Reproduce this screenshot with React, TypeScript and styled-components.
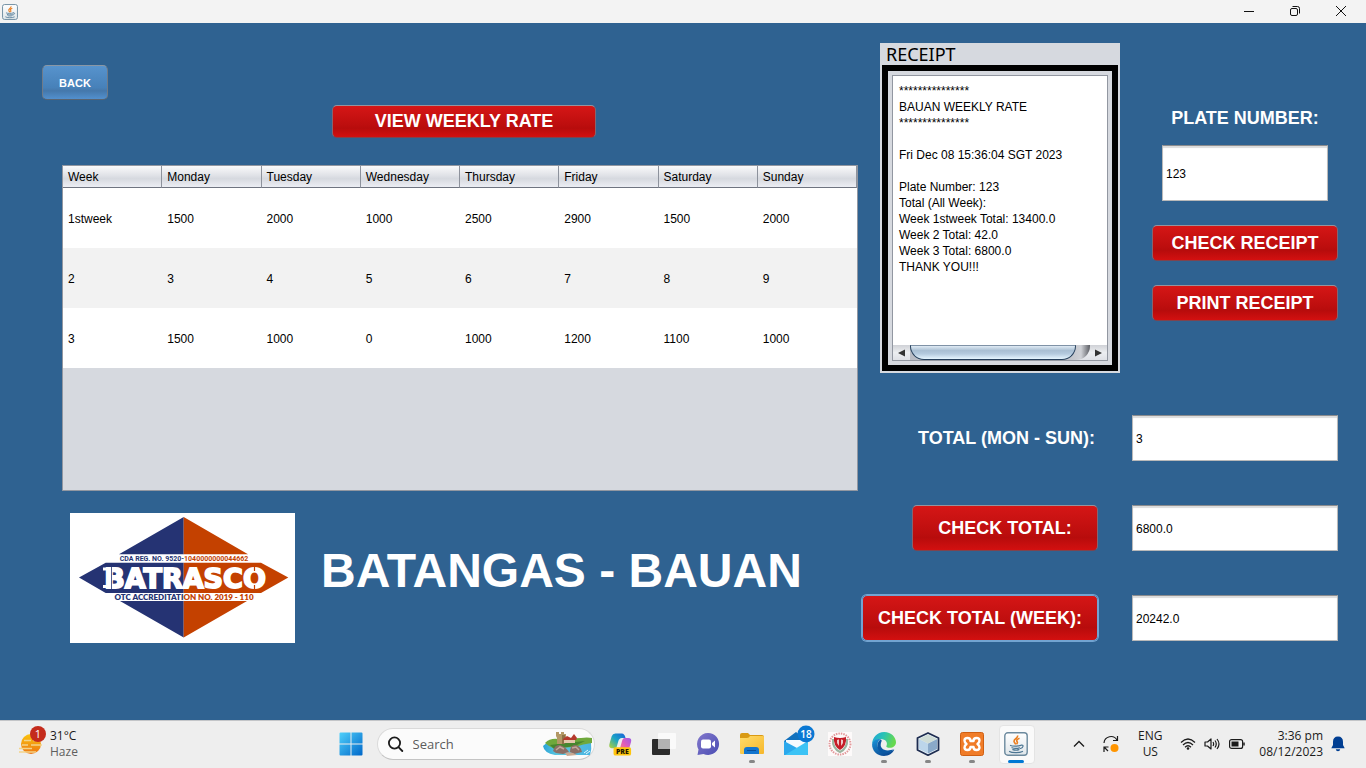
import React from "react";
import styled, { createGlobalStyle, css } from "styled-components";

const GlobalStyle = createGlobalStyle`
  *, *::before, *::after { box-sizing: border-box; }
  body { margin: 0; font-family: "Liberation Sans", Arial, sans-serif; }
  button, input, textarea { font: inherit; margin: 0; }
  h1 { margin: 0; }
`;

const Desktop = styled.div`
  display: flex;
  flex-direction: column;
  min-height: 100vh;
  background: #2f6291;
`;

/* ---------- window title bar ---------- */

const TitleBar = styled.header`
  display: flex;
  align-items: center;
  justify-content: space-between;
  height: 23px;
  padding: 0 2px;
  background: #f3f3f3;
`;

const WindowControls = styled.div`
  display: flex;
`;

const WindowButton = styled.button`
  display: flex;
  align-items: center;
  justify-content: center;
  width: 46px;
  height: 22px;
  padding: 0 0 2px;
  border: 0;
  background: transparent;
`;

/* ---------- form ---------- */

const Content = styled.main`
  flex: 1;
  display: grid;
  grid-template-columns: minmax(0, 1fr) 476px;
  column-gap: 4px;
  padding: 20px 28px 20px 42px;
`;

const RatesColumn = styled.section`
  display: flex;
  flex-direction: column;
  padding-top: 22px;
`;

const buttonFace = css`
  border: 1px solid;
  border-radius: 5px;
  color: #fff;
  font-weight: bold;
  white-space: nowrap;
`;

const BackButton = styled.button`
  ${buttonFace}
  align-self: flex-start;
  width: 66px;
  height: 35px;
  padding: 0;
  font-size: 11px;
  border-color: #8a97a5 #707b88 #5a6470;
  background: linear-gradient(#5793cd, #4781b9 65%, #4578ab 75%, #5290ce);
`;

const RedButton = styled.button<{ $width: number; $height: number; $focused?: boolean }>`
  ${buttonFace}
  width: ${(p) => p.$width}px;
  height: ${(p) => p.$height}px;
  padding: 0;
  font-size: 18px;
  border-color: #96939e #86646f #7c4450;
  background: linear-gradient(#d51616, #bd0e0e 60%, #b70c0c 72%, #d31010);
  ${(p) =>
    p.$focused &&
    css`
      border-color: #73a4d1;
      box-shadow: 0 0 0 1px #73a4d1;
    `}
`;

const ViewRow = styled.div`
  display: flex;
  justify-content: center;
  padding: 5px 0 27px 28px;
`;

const TablePane = styled.div`
  margin-left: 20px;
  min-height: 326px;
  border: 1px solid #9297a1;
  background: #d6d9df;
`;

const RateTable = styled.table`
  width: 100%;
  table-layout: fixed;
  border-collapse: separate;
  border-spacing: 0;
  font-size: 12px;
  color: #000;

  th {
    height: 22px;
    padding: 0 5px;
    font-weight: normal;
    text-align: left;
    border-right: 1px solid #8d929c;
    border-bottom: 1px solid #6f7480;
    background: linear-gradient(#fafafb, #e0e2e7 45%, #d6d9df 60%, #eceef4);
  }
  td {
    height: 60px;
    padding: 2px 5px 0;
    background: #fff;
  }
  tbody tr:nth-child(even) td {
    background: #f2f2f2;
  }
`;

const Brand = styled.div`
  display: flex;
  align-items: center;
  gap: 26px;
  padding: 22px 0 0 28px;
`;

const Destination = styled.h1`
  padding-bottom: 14px;
  font-size: 48px;
  line-height: 56px;
  color: #fff;
  white-space: nowrap;
`;

const ReceiptColumn = styled.section`
  display: flex;
  flex-direction: column;
  gap: 42px;
`;

const ReceiptRow = styled.div`
  display: flex;
  justify-content: space-between;
  padding-left: 18px;
`;

const ReceiptPanel = styled.div`
  width: 240px;
  padding: 0 2px 2px;
  background: #d6d9df;
`;

const ReceiptTitle = styled.label`
  display: block;
  height: 22px;
  padding-left: 4px;
  font: 18px/22px "Noto Sans", sans-serif;
  color: #000;
`;

const ReceiptFrame = styled.div`
  padding: 4px;
  border: 6px solid #000;
`;

const ReceiptPane = styled.div`
  display: flex;
  flex-direction: column;
  border: 1px solid #9297a1;
  background: #fff;
`;

const ReceiptText = styled.textarea`
  display: block;
  width: 100%;
  height: 269px;
  padding: 7px 6px 6px;
  border: 0;
  outline: 0;
  resize: none;
  overflow: hidden;
  white-space: pre;
  font-size: 12px;
  line-height: 16px;
  color: #000;
  background: #fff;
`;

const ScrollBar = styled.div`
  display: flex;
  height: 15px;
  background: linear-gradient(#cfd1d6, #eceef1 50%, #dfe1e6);
`;

const ScrollArrow = styled.button`
  display: flex;
  align-items: center;
  justify-content: center;
  width: 17px;
  padding: 0;
  border: 0;
  background: transparent;
`;

const ScrollTrack = styled.div`
  flex: 1;
  padding-right: 14px;
  border-radius: 0 0 14px 0;
  background: linear-gradient(90deg, #b9bcc4 85%, #cfd1d6 95%, #5c5e64);
`;

const ScrollThumb = styled.div`
  height: 15px;
  border: 1px solid #26405c;
  border-top-color: #7f92a6;
  border-radius: 0 0 14px 14px;
  background: linear-gradient(#dfeaf4, #a9bfd3 35%, #b4cade 60%, #e6f6ff);
`;

const ReceiptControls = styled.div`
  display: flex;
  flex-direction: column;
  align-items: center;
  width: 186px;
  padding-top: 63px;
`;

const FieldLabel = styled.label`
  font-size: 18px;
  line-height: 24px;
  font-weight: bold;
  color: #fff;
  white-space: nowrap;
`;

const TextField = styled.input`
  width: 100%;
  height: 46px;
  padding: 1px 3px 0;
  border: 1px solid #b9b9b9;
  border-top-color: #8b8c8e;
  border-radius: 0;
  font-size: 12px;
  color: #000;
  background: #fff;
  box-shadow: inset 0 2px 1px #dcdcdc;
`;

const PlateField = styled(TextField)`
  width: 166px;
  height: 56px;
  margin: 15px 0 24px;
`;

const ReceiptActions = styled.div`
  display: flex;
  flex-direction: column;
  gap: 24px;
`;

const Totals = styled.div`
  display: grid;
  grid-template-columns: minmax(0, 1fr) 206px;
  column-gap: 34px;
  row-gap: 44px;
  align-items: center;
  justify-items: end;
`;

const TotalLabel = styled(FieldLabel)`
  padding-right: 3px;
`;

/* ---------- taskbar ---------- */

const Taskbar = styled.footer`
  display: grid;
  grid-template-columns: 1fr auto 1fr;
  align-items: center;
  height: 48px;
  padding-bottom: 2px;
  border-top: 1px solid #c3c5c8;
  background: #eeeeee;
  font: 12px/16px "Open Sans", "Noto Sans", sans-serif;
  color: #1b1b1b;
`;

const Weather = styled.div`
  display: flex;
  align-items: center;
  gap: 3px;
  padding-left: 17px;
`;

const Muted = styled.div`
  color: #5e5e5e;
`;

const Apps = styled.nav`
  display: flex;
  align-items: center;
`;

const AppButton = styled.button<{ $running?: boolean; $active?: boolean }>`
  position: relative;
  display: flex;
  align-items: center;
  justify-content: center;
  width: 44px;
  height: 44px;
  padding: 0;
  border: 0;
  background: transparent;

  ${(p) =>
    p.$active &&
    css`
      &::before {
        content: "";
        position: absolute;
        inset: 3px 3px 2px 5px;
        border: 1px solid #e4e4e4;
        border-radius: 4px;
        background: #fafafa;
      }
    `}
  ${(p) =>
    (p.$running || p.$active) &&
    css`
      &::after {
        content: "";
        position: absolute;
        bottom: 3px;
        left: 50%;
        width: ${p.$active ? 16 : 6}px;
        height: 3px;
        margin-left: ${p.$active ? -8 : -3}px;
        border-radius: 2px;
        background: ${p.$active ? "#0078d4" : "#868686"};
      }
    `}
  svg {
    position: relative;
    overflow: visible;
  }
`;

const SearchBox = styled.label`
  display: flex;
  align-items: center;
  width: 218px;
  height: 32px;
  margin: 0 3px 0 4px;
  padding: 0 1px 0 10px;
  border: 1px solid #dadada;
  border-bottom-color: #c4c4c4;
  border-radius: 16px;
  background: #fbfbfb;
`;

const SearchInput = styled.input`
  flex: 1;
  min-width: 0;
  padding: 0 0 0 9px;
  border: 0;
  outline: 0;
  background: transparent;
  font-size: 13px;
  &::placeholder {
    color: #5c5c5c;
    opacity: 1;
  }
`;

const Tray = styled.div`
  display: flex;
  align-items: center;
  justify-content: flex-end;
  padding-right: 21px;
`;

const ChevronBox = styled.div`
  display: flex;
  width: 29px;
`;

const Language = styled.div`
  width: 60px;
  text-align: center;
`;

const TrayIcons = styled.div`
  display: flex;
  align-items: center;
  gap: 8px;
  margin-right: 14px;
`;

const Clock = styled.div`
  margin-right: 8px;
  text-align: right;
`;

/* ---------- drawings ---------- */

const JavaIcon = ({ size }: { size: number }) => (
  <svg width={size} height={size} viewBox="0 0 24 24" aria-hidden="true">
    <defs>
      <linearGradient id="javaFace" x1="0" y1="0" x2="0" y2="1">
        <stop offset="0" stopColor="#fff" />
        <stop offset="1" stopColor="#dfe6ea" />
      </linearGradient>
    </defs>
    <rect x="0.8" y="0.8" width="22.4" height="22.4" rx="3" fill="url(#javaFace)" stroke="#6c8a9e" strokeWidth="1.4" />
    <path d="M13.500 3.500c1.200 2.800-5 3.800-3.200 6.600.6 1 1.200 1.500 1 2.400M15.500 6.300c-3.600 1.400-3 2.500-2.200 3.700.4.8-.1 1.500-.8 2.200" fill="none" stroke="#ea7d1e" strokeWidth="1.600" />
    <path d="M6.500 13.500c2 1 7.500.9 10.300-.1M8 15.700c2 .8 5 .8 7.500.1M8.800 17.600c1.800.6 4.400.6 6.200 0M5.500 19.500c2 1.500 10 1.600 13 0M17 13.200c3-.6 2.600 2.400-.5 3.300" fill="none" stroke="#4c7693" strokeWidth="1.200" strokeLinecap="round" />
  </svg>
);

const BatrascoLogo = () => (
  <svg width="225" height="130" viewBox="0 0 225 130" role="img" aria-label="Batrasco">
    <rect width="225" height="130" fill="#fff" />
    <path d="M113.700 4V41.300H49ZM9 64.500 35.700 49.700H113.700V80H35.700ZM50 88H113.700V124.500Z" fill="#253373" />
    <path d="M113.700 4V41.300H178ZM218.300 64.500 191 49.700H113.700V80H191ZM177 88H113.700V124.500Z" fill="#c44100" />
    <text x="114" y="48" textAnchor="middle" fontFamily="Roboto, sans-serif" fontWeight="700" fontSize="7" fill="#253373">
      CDA REG. NO. 9520-<tspan fill="#c44100">1040000000044662</tspan>
    </text>
    <text x="115" y="74.500" textAnchor="middle" fontFamily="DejaVu Sans, sans-serif" fontWeight="bold" fontSize="27" fill="#fff" stroke="#fff" strokeWidth="1.800">
      BATRASCO
    </text>
    <path d="M33 56H38M33 73.500H38" stroke="#fff" strokeWidth="3" />
    <path d="M41.500 53V76" stroke="#253373" strokeWidth="0.800" />
    <path d="M184.500 53V58M184.500 72V76" stroke="#c44100" strokeWidth="1.200" />
    <text x="114" y="86.700" textAnchor="middle" fontFamily="Lato, sans-serif" fontWeight="800" fontSize="8" fill="#253373">
      OTC ACCREDITATI<tspan fill="#c44100">ON NO. 2019 - 110</tspan>
    </text>
  </svg>
);

const HazeIcon = () => (
  <svg width="30" height="32" viewBox="0 1 30 32" overflow="visible" aria-hidden="true">
    <defs>
      <linearGradient id="sun" x1="0" y1="0" x2="0" y2="1">
        <stop offset="0" stopColor="#fbc40d" />
        <stop offset="1" stopColor="#ec7413" />
      </linearGradient>
    </defs>
    <circle cx="14" cy="17" r="10" fill="url(#sun)" />
    <path d="M7 13.500H14M16 13.500H20M5 18H11M14 18H25M2 21.500H15M2 25H19" stroke="#f3d489" strokeWidth="1.500" />
    <circle cx="21" cy="7" r="8" fill="#c42b1c" />
    <text x="21" y="11" textAnchor="middle" fontFamily="Open Sans, sans-serif" fontSize="11" fill="#fff">1</text>
  </svg>
);

const StartIcon = () => (
  <svg width="24" height="24" viewBox="0 0 24 24" aria-hidden="true">
    <defs>
      <linearGradient id="start" x1="0" y1="0" x2="1" y2="1">
        <stop offset="0" stopColor="#4fd0fb" />
        <stop offset="1" stopColor="#0067c9" />
      </linearGradient>
    </defs>
    <path d="M1.500.5H11.500V11.500H.5V1.500Q.5.500 1.500.5ZM12.500.5H22.500Q23.500.500 23.500 1.500V11.500H12.500ZM.5 12.500H11.500V23.500H1.500Q.5 23.500.5 22.500ZM12.500 12.500H23.500V22.500Q23.500 23.500 22.500 23.500H12.500Z" fill="url(#start)" />
  </svg>
);

const CastleIcon = () => (
  <svg width="52" height="28" viewBox="0 0 52 28" aria-hidden="true">
    <defs>
      <linearGradient id="sea" x1="0" y1="0" x2="1" y2="0">
        <stop offset="0" stopColor="#2ba3d6" />
        <stop offset="0.300" stopColor="#5cc8e0" />
        <stop offset="1" stopColor="#49b4e2" />
      </linearGradient>
    </defs>
    <path d="M2 16Q6 11 12 14L50 13Q51 19 49 25H14Q3 23 2 16Z" fill="url(#sea)" />
    <path d="M4 13Q9 8 17 9L40 8Q46 7 51 8V13Q42 14 34 17L12 18 8 16Z" fill="#6fa83c" />
    <path d="M9 15Q24 13 44 11L34 16 13 19Z" fill="#47852f" />
    <path d="M15 2H18V4H20V2H23V4H25V9H24V14H16V8L15 6Z" fill="#b39866" />
    <path d="M21 5H24V14H21Z" fill="#8d7247" />
    <path d="M22 9 26 6 30 8 33 4 36 8 35 10H22Z" fill="#b5392d" />
    <path d="M23 10H34V13H23Z" fill="#e4c7ab" />
    <path d="M12 21Q14 14 19 15 25 17 28 22L22 24 15 23ZM29 22Q29 15 34 15 40 16 41 22L33 24Z" fill="#8b6f66" />
    <path d="M24 23Q30 21 36 25L26 26Z" fill="#c9a992" />
    <path d="M15 20 19 17 23 19M31 18 35 17 38 20" stroke="#c3a89a" strokeWidth="1.500" fill="none" />
    <path d="M43 23 47 20M45 24 49 21" stroke="#e3f6fb" strokeWidth="1" />
  </svg>
);

const CopilotIcon = () => (
  <svg width="24" height="24" viewBox="0 0 26 25" aria-hidden="true">
    <defs>
      <linearGradient id="copA" x1="1" y1="0" x2="0" y2="1">
        <stop offset="0" stopColor="#1960d8" />
        <stop offset="0.500" stopColor="#19a4c6" />
        <stop offset="1" stopColor="#b7d336" />
      </linearGradient>
      <linearGradient id="copB" x1="1" y1="0" x2="0" y2="1">
        <stop offset="0" stopColor="#9c5be8" />
        <stop offset="0.500" stopColor="#e05cba" />
        <stop offset="1" stopColor="#ff9060" />
      </linearGradient>
    </defs>
    <path d="M8 1H15Q18 1 19 6L15 6Q12 6 11 10L9 17H4Q0 17 2 11L4 4Q5 1 8 1Z" fill="url(#copA)" />
    <path d="M18 6H22Q26 6 25 10L23 17Q22 21 18 21H12L15 10Q16 6 18 6Z" fill="url(#copB)" />
    <rect x="6" y="16" width="19" height="9" rx="2" fill="#fec50d" />
    <text x="15.500" y="23.500" textAnchor="middle" fontFamily="Open Sans, sans-serif" fontWeight="800" fontSize="7.500" fill="#221900">PRE</text>
  </svg>
);

const TaskViewIcon = () => (
  <svg width="24" height="24" viewBox="0 0 24 24" aria-hidden="true">
    <rect x="0" y="7" width="18" height="16" rx="1" fill="#2c2c2c" />
    <rect x="6" y="1" width="18" height="16" rx="1" fill="#fafafa" />
    <rect x="6" y="7" width="12" height="10" fill="#b3b3b3" />
  </svg>
);

const ChatIcon = () => (
  <svg width="24" height="24" viewBox="0 0 24 24" aria-hidden="true">
    <defs>
      <linearGradient id="chat" x1="0" y1="0" x2="1" y2="1">
        <stop offset="0" stopColor="#8378cc" />
        <stop offset="1" stopColor="#4a4db3" />
      </linearGradient>
    </defs>
    <path d="M12 1a11 11 0 1 1-4.500 21L1.500 23 2.500 17.500A11 11 0 0 1 12 1Z" fill="url(#chat)" />
    <rect x="5" y="7.500" width="10" height="9" rx="2" fill="#fff" />
    <path d="M16 11 19 8.500V15.500L16 13Z" fill="#fff" />
  </svg>
);

const FolderIcon = () => (
  <svg width="26" height="24" viewBox="0 0 26 24" aria-hidden="true">
    <defs>
      <linearGradient id="folder" x1="0" y1="0" x2="1" y2="1">
        <stop offset="0" stopColor="#ffdc6a" />
        <stop offset="1" stopColor="#f6b72b" />
      </linearGradient>
    </defs>
    <path d="M1 3Q1 1 3 1H9L11 3H23Q25 3 25 5V10H1Z" fill="#d99a14" />
    <path d="M1 6H8Q10 6 11 4H24Q25 4 25 5V21Q25 22 24 22H2Q1 22 1 21Z" fill="url(#folder)" />
    <path d="M5 22V18Q5 15 8 15H17Q20 15 20 18V22Z" fill="#1376cf" />
    <path d="M8 18.500H17" stroke="#0a519b" />
  </svg>
);

const MailIcon = () => (
  <svg width="32" height="30" viewBox="-3 3 32 30" aria-hidden="true">
    <path d="M1 15 13 6 25 15V28Q25 29 24 29H2Q1 29 1 28Z" fill="#1271bd" />
    <path d="M3 14H23V18L13 23 3 18Z" fill="#f5fafe" />
    <path d="M1 15 14 22 6 29H2Q1 29 1 28Z" fill="#2ba8ec" />
    <path d="M25 15 2 29H24Q25 29 25 28Z" fill="#3cc3f5" />
    <circle cx="23" cy="8" r="8.500" fill="#0a78d3" />
    <text x="23" y="12" textAnchor="middle" fontFamily="Open Sans, sans-serif" fontSize="10" fontWeight="600" fill="#fff">18</text>
  </svg>
);

const CrestIcon = () => (
  <svg width="24" height="24" viewBox="0 0 24 24" aria-hidden="true">
    <rect width="24" height="24" fill="#fdfafa" />
    <circle cx="12" cy="12" r="10.500" fill="none" stroke="#e29a9c" strokeWidth="2" strokeDasharray="1.500 1" />
    <path d="M5 7Q4 16 12 20 20 16 19 7" fill="none" stroke="#9cb5a0" strokeWidth="2" />
    <path d="M6 5Q12 7 18 5 19 14 12 18 5 14 6 5Z" fill="#c51d27" />
    <path d="M9 8 12 7 15 8V11Q14 13 12 15 10 13 9 11Z" fill="#efc5c6" />
    <path d="M12 7V15" stroke="#c51d27" strokeWidth="2" />
  </svg>
);

const EdgeIcon = () => (
  <svg width="24" height="24" viewBox="0 0 24 24" aria-hidden="true">
    <defs>
      <linearGradient id="edgeTop" x1="0" y1="0" x2="1" y2="0.300">
        <stop offset="0" stopColor="#1ba2dc" />
        <stop offset="0.500" stopColor="#2bc3b4" />
        <stop offset="1" stopColor="#65d84f" />
      </linearGradient>
      <linearGradient id="edgeBody" x1="0" y1="0" x2="0.600" y2="1">
        <stop offset="0" stopColor="#1b95da" />
        <stop offset="1" stopColor="#0b4a94" />
      </linearGradient>
    </defs>
    <path d="M.2 12C.2 6 5 0 12.200 0 19.500 0 24 5.500 24 10.300c0 3.500-2.900 5.500-6.100 5.500-2.700 0-4-.9-3.500-1.800C15.500 12 15.200 8 10.400 7.200 5.500 6.400 2 8.500.2 12Z" fill="url(#edgeTop)" />
    <path d="M.1 12C1 8 4.500 6.500 8.500 7c-5 4-3.500 10.500 2 12.300 4.400 1.500 8.500.3 11.800-1.700C20.500 21.500 16.700 24 12 24 5 24-.3 18.500.1 12Z" fill="url(#edgeBody)" />
    <path d="M8.800 12C8 16 12 20.500 22 17.300 16 23.500 5.600 21.500 5.400 14 5.300 11 6.800 8.500 8.700 7.300 10.500 8.300 9.300 9.500 8.800 12Z" fill="#0c59a4" />
  </svg>
);

const NetBeansIcon = () => (
  <svg width="24" height="24" viewBox="0 0 24 24" aria-hidden="true">
    <path d="M12 1 22.500 6V18L12 23.200 1.500 18V6Z" fill="#e9f2f8" stroke="#1d2c50" strokeWidth="1.800" strokeLinejoin="round" />
    <path d="M3 7 12 11.500V21.500L3 17Z" fill="#bcd5ea" />
    <path d="M12 11.500 21 7V17L12 21.500Z" fill="#8aa9c9" />
    <path d="M12 2.500 21 7 12 11.500 3 7Z" fill="#cfdcd6" />
  </svg>
);

const XamppIcon = () => (
  <svg width="24" height="24" viewBox="0 0 24 24" aria-hidden="true">
    <rect x="0.500" y="0.500" width="23" height="23" rx="2" fill="#f07c28" stroke="#cf5f12" />
    <path d="M7.500 6Q10.500 6 10.500 9H13.500Q13.500 6 16.500 6 19.500 6 19.500 8.500 19.500 10.500 17.500 12 19.500 13.500 19.500 15.500 19.500 18 16.500 18 13.500 18 13.500 15H10.500Q10.500 18 7.500 18 4.500 18 4.500 15.500 4.500 13.500 6.500 12 4.500 10.500 4.500 8.500 4.500 6 7.500 6Z" fill="none" stroke="#fff" strokeWidth="2.400" strokeLinejoin="round" />
  </svg>
);

const SyncIcon = () => (
  <svg width="18" height="18" viewBox="0 0 18 18" fill="none" stroke="#1b1b1b" strokeWidth="1.200" aria-hidden="true">
    <path d="M2 8A7 7 0 0 1 15 5M15.500 1V5.500H11M6 16 2.500 12.500M2 17V12H6.500" />
    <circle cx="12.500" cy="13" r="4" fill="#ff9500" stroke="none" />
  </svg>
);

const WifiIcon = () => (
  <svg width="16" height="14" viewBox="0 0 16 14" fill="none" stroke="#1b1b1b" strokeWidth="1.200" aria-hidden="true">
    <path d="M1 5.500Q8-1.500 15 5.500M3 8Q8 3 13 8M5 10.200Q8 7.300 11 10.200" />
    <circle cx="8" cy="11.500" r="1.300" fill="#1b1b1b" stroke="none" />
  </svg>
);

const SpeakerIcon = () => (
  <svg width="17" height="14" viewBox="0 0 17 14" fill="none" stroke="#1b1b1b" strokeWidth="1.200" aria-hidden="true">
    <path d="M1 5H3.500L7 2V12L3.500 9H1Z" strokeLinejoin="round" />
    <path d="M9 5Q10.300 7 9 9M11 3.500Q13.500 7 11 10.500M13 2Q17 7 13 12" />
  </svg>
);

const BatteryIcon = () => (
  <svg width="16" height="12" viewBox="0 0 16 12" aria-hidden="true">
    <rect x="0.600" y="1.600" width="13" height="8.800" rx="2" fill="none" stroke="#1b1b1b" strokeWidth="1.200" />
    <rect x="2.500" y="3.500" width="7" height="5" fill="#1b1b1b" />
    <path d="M15 4.500V7.500" stroke="#1b1b1b" strokeWidth="1.500" />
  </svg>
);

const BellIcon = () => (
  <svg width="14" height="16" viewBox="0 0 14 16" fill="#003e92" aria-hidden="true">
    <path d="M7 .5Q12 .5 12 6V9L13.700 12.300H.3L2 9V6Q2 .5 7 .5ZM4.800 13.200H9.200Q9 15.300 7 15.300 5 15.300 4.800 13.200Z" />
  </svg>
);

/* ---------- data ---------- */

const DAYS = ["Week", "Monday", "Tuesday", "Wednesday", "Thursday", "Friday", "Saturday", "Sunday"];

const RATES = [
  ["1stweek", "1500", "2000", "1000", "2500", "2900", "1500", "2000"],
  ["2", "3", "4", "5", "6", "7", "8", "9"],
  ["3", "1500", "1000", "0", "1000", "1200", "1100", "1000"],
];

const RECEIPT = [
  "***************",
  "BAUAN WEEKLY RATE",
  "***************",
  "",
  "Fri Dec 08 15:36:04 SGT 2023",
  "",
  "Plate Number: 123",
  "Total (All Week):",
  "Week 1stweek Total: 13400.0",
  "Week 2 Total: 42.0",
  "Week 3 Total: 6800.0",
  "THANK YOU!!!",
].join("\n");

const APPS = [
  { name: "Copilot", icon: <CopilotIcon /> },
  { name: "Task view", icon: <TaskViewIcon /> },
  { name: "Chat", icon: <ChatIcon /> },
  { name: "File Explorer", icon: <FolderIcon />, running: true },
  { name: "Mail", icon: <MailIcon /> },
  { name: "University portal", icon: <CrestIcon /> },
  { name: "Edge", icon: <EdgeIcon />, running: true },
  { name: "NetBeans", icon: <NetBeansIcon />, running: true },
  { name: "XAMPP", icon: <XamppIcon />, running: true },
  { name: "Java", icon: <JavaIcon size={24} />, active: true },
];

export default function App() {
  return (
    <Desktop>
      <GlobalStyle />
      <TitleBar>
        <JavaIcon size={16} />
        <WindowControls>
          <WindowButton aria-label="Minimize">
            <svg width="10" height="10" viewBox="0 0 10 10" stroke="#111"><path d="M0 5.500H10" /></svg>
          </WindowButton>
          <WindowButton aria-label="Restore">
            <svg width="10" height="10" viewBox="0 0 10 10" fill="none" stroke="#111">
              <rect x="0.500" y="2.500" width="7" height="7" rx="1.500" />
              <path d="M2.500 .5H7.500Q9.500.500 9.500 2.500V7.500" />
            </svg>
          </WindowButton>
          <WindowButton aria-label="Close">
            <svg width="10" height="10" viewBox="0 0 10 10" stroke="#111"><path d="M0 0 10 10M10 0 0 10" /></svg>
          </WindowButton>
        </WindowControls>
      </TitleBar>

      <Content>
        <RatesColumn>
          <BackButton>BACK</BackButton>
          <ViewRow>
            <RedButton $width={264} $height={33}>VIEW WEEKLY RATE</RedButton>
          </ViewRow>
          <TablePane>
            <RateTable>
              <thead>
                <tr>{DAYS.map((day) => <th key={day} scope="col">{day}</th>)}</tr>
              </thead>
              <tbody>
                {RATES.map((row) => (
                  <tr key={row[0]}>{row.map((cell, i) => <td key={i}>{cell}</td>)}</tr>
                ))}
              </tbody>
            </RateTable>
          </TablePane>
          <Brand>
            <BatrascoLogo />
            <Destination>BATANGAS - BAUAN</Destination>
          </Brand>
        </RatesColumn>

        <ReceiptColumn>
          <ReceiptRow>
            <ReceiptPanel>
              <ReceiptTitle htmlFor="receipt">RECEIPT</ReceiptTitle>
              <ReceiptFrame>
                <ReceiptPane>
                  <ReceiptText id="receipt" readOnly value={RECEIPT} />
                  <ScrollBar>
                    <ScrollArrow aria-label="Scroll left">
                      <svg width="7" height="8" viewBox="0 0 7 8" fill="#333"><path d="M7 .5V7.500L0 4Z" /></svg>
                    </ScrollArrow>
                    <ScrollTrack><ScrollThumb /></ScrollTrack>
                    <ScrollArrow aria-label="Scroll right">
                      <svg width="7" height="8" viewBox="0 0 7 8" fill="#333"><path d="M0 .5V7.500L7 4Z" /></svg>
                    </ScrollArrow>
                  </ScrollBar>
                </ReceiptPane>
              </ReceiptFrame>
            </ReceiptPanel>
            <ReceiptControls>
              <FieldLabel htmlFor="plate">PLATE NUMBER:</FieldLabel>
              <PlateField id="plate" defaultValue="123" />
              <ReceiptActions>
                <RedButton $width={186} $height={36}>CHECK RECEIPT</RedButton>
                <RedButton $width={186} $height={36}>PRINT RECEIPT</RedButton>
              </ReceiptActions>
            </ReceiptControls>
          </ReceiptRow>

          <Totals>
            <TotalLabel htmlFor="total">TOTAL (MON - SUN):</TotalLabel>
            <TextField id="total" defaultValue="3" />
            <RedButton $width={186} $height={46}>CHECK TOTAL:</RedButton>
            <TextField aria-label="Total" defaultValue="6800.0" />
            <RedButton $width={236} $height={46} $focused>CHECK TOTAL (WEEK):</RedButton>
            <TextField aria-label="Total of all weeks" defaultValue="20242.0" />
          </Totals>
        </ReceiptColumn>
      </Content>

      <Taskbar>
        <Weather>
          <HazeIcon />
          <div>
            <div>31°C</div>
            <Muted>Haze</Muted>
          </div>
        </Weather>
        <Apps>
          <AppButton aria-label="Start"><StartIcon /></AppButton>
          <SearchBox>
            <svg width="16" height="16" viewBox="0 0 16 16" fill="none" stroke="#1b1b1b" strokeWidth="1.800" strokeLinecap="round" aria-hidden="true">
              <circle cx="6.500" cy="7" r="5.600" />
              <path d="M10.700 11.300 14.300 15" />
            </svg>
            <SearchInput placeholder="Search" aria-label="Search" />
            <CastleIcon />
          </SearchBox>
          {APPS.map((app) => (
            <AppButton key={app.name} aria-label={app.name} $running={app.running} $active={app.active}>
              {app.icon}
            </AppButton>
          ))}
        </Apps>
        <Tray>
          <ChevronBox>
            <svg width="12" height="8" viewBox="0 0 12 8" fill="none" stroke="#1b1b1b" strokeWidth="1.300" aria-hidden="true">
              <path d="M1 6.500 6 1.500 11 6.500" />
            </svg>
          </ChevronBox>
          <SyncIcon />
          <Language>
            <div>ENG</div>
            <div>US</div>
          </Language>
          <TrayIcons>
            <WifiIcon />
            <SpeakerIcon />
            <BatteryIcon />
          </TrayIcons>
          <Clock>
            <div>3:36 pm</div>
            <div>08/12/2023</div>
          </Clock>
          <BellIcon />
        </Tray>
      </Taskbar>
    </Desktop>
  );
}
